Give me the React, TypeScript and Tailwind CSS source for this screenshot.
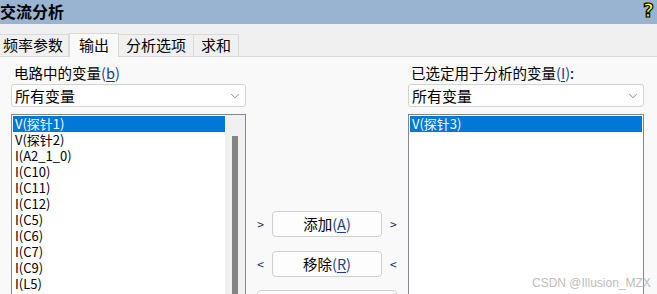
import { ChevronDown } from 'lucide-react';

const leftItems = [
  'V(探针1)',
  'V(探针2)',
  'I(A2_1_0)',
  'I(C10)',
  'I(C11)',
  'I(C12)',
  'I(C5)',
  'I(C6)',
  'I(C7)',
  'I(C9)',
  'I(L5)',
];

const tabs = ['频率参数', '输出', '分析选项', '求和'];

function Dropdown() {
  return (
    <div className="flex items-center justify-between h-[23px] bg-white border border-[#d3d3d3] rounded-[3px] pl-[3px] pr-[3px]">
      <span className="text-[15px] leading-none text-black">所有变量</span>
      <ChevronDown className="w-[14px] h-[14px] text-[#666]" strokeWidth={1.3} />
    </div>
  );
}

function Hotkey({ k }: { k: string }) {
  return (
    <span className="text-[#1a3f8f]">
      (<span className="underline underline-offset-2">{k}</span>)
    </span>
  );
}

export default function App() {
  return (
    <div
      className="w-[657px] h-[294px] overflow-hidden bg-[#f9f9f9] relative"
      style={{ fontFamily: '"Noto Sans CJK SC", "Noto Sans", sans-serif' }}
    >
      {/* title bar */}
      <div className="h-[24px] bg-[#99b4d1] flex items-start justify-between">
        <span className="mt-[3px] text-[16px] font-bold leading-none text-black">交流分析</span>
        <span className="mr-[3px] mt-[1px] text-[19px] font-black leading-[19px] text-[#ffff00] [-webkit-text-stroke:1.2px_#000] [font-family:'DejaVu_Sans',sans-serif]">
          ?
        </span>
      </div>

      {/* tab strip */}
      <div className="h-[33px] bg-[#f0f0f0] flex items-end border-b border-[#d9d9d9]">
        {tabs.map((t, i) =>
          i === 1 ? (
            <div
              key={t}
              className="h-[24px] px-[9px] -mb-px bg-[#f9f9f9] border border-b-0 border-[#d9d9d9] flex items-center text-[15px] text-black"
            >
              {t}
            </div>
          ) : (
            <div
              key={t}
              className={`h-[22px] ${i === 0 ? 'pl-[3px] pr-[5px]' : 'px-[7px]'} border-t border-r border-[#d9d9d9] flex items-center text-[15px] text-black`}
            >
              {t}
            </div>
          )
        )}
      </div>

      {/* content */}
      <div className="flex pl-[11px] pt-[6px]">
        {/* left column */}
        <div className="w-[235px] flex flex-col">
          <div className="h-[20px] pl-[3px] text-[14.5px] leading-[20px] text-black">
            电路中的变量<Hotkey k="b" />
          </div>
          <div className="mt-[1px]">
            <Dropdown />
          </div>
          <div className="mt-[7px] h-[200px] border border-[#828790] bg-white flex">
            <div className="flex-1 pt-px pl-px text-[13px] leading-[16px]">
              {leftItems.map((it, i) => (
                <div
                  key={it}
                  className={`h-[16px] pl-[2px] ${i === 0 ? 'bg-[#0078d7] text-white' : 'text-black'}`}
                >
                  {it}
                </div>
              ))}
            </div>
            <div className="w-[20px] bg-[#f0f0f0] flex justify-center pt-[21px]">
              <div className="w-[6px] h-[160px] bg-[#858585]" />
            </div>
          </div>
        </div>

        {/* middle column */}
        <div className="w-[162px] flex flex-col items-center pt-[148px]">
          <div className="flex items-center gap-[8px]">
            <span className="text-[12px] text-[#1a2a55]">&gt;</span>
            <button className="w-[110px] h-[26px] bg-[#fdfdfd] border border-[#d0d0d0] rounded-[4px] text-[14.5px] text-black">
              添加<Hotkey k="A" />
            </button>
            <span className="text-[12px] text-[#1a2a55]">&gt;</span>
          </div>
          <div className="flex items-center gap-[8px] mt-[14px]">
            <span className="text-[12px] text-[#1a2a55]">&lt;</span>
            <button className="w-[110px] h-[26px] bg-[#fdfdfd] border border-[#d0d0d0] rounded-[4px] text-[14.5px] text-black">
              移除<Hotkey k="R" />
            </button>
            <span className="text-[12px] text-[#1a2a55]">&lt;</span>
          </div>
          <div className="mt-[13px] w-[140px] h-[26px] bg-[#fdfdfd] border border-[#d0d0d0] rounded-[4px]" />
        </div>

        {/* right column */}
        <div className="w-[236px] flex flex-col">
          <div className="h-[20px] pl-[3px] text-[14.5px] leading-[20px] text-black">
            已选定用于分析的变量<Hotkey k="I" />:
          </div>
          <div className="mt-[1px]">
            <Dropdown />
          </div>
          <div className="mt-[7px] h-[200px] border border-[#828790] bg-white pt-px px-px text-[13px] leading-[16px]">
            <div className="h-[16px] pl-[2px] bg-[#0078d7] text-white">V(探针3)</div>
          </div>
        </div>
      </div>

      <span className="absolute left-[532px] top-[274px] text-[12px] text-[#bdbdbd] [font-family:'Liberation_Sans',sans-serif]">
        CSDN @Illusion_MZX
      </span>
    </div>
  );
}
